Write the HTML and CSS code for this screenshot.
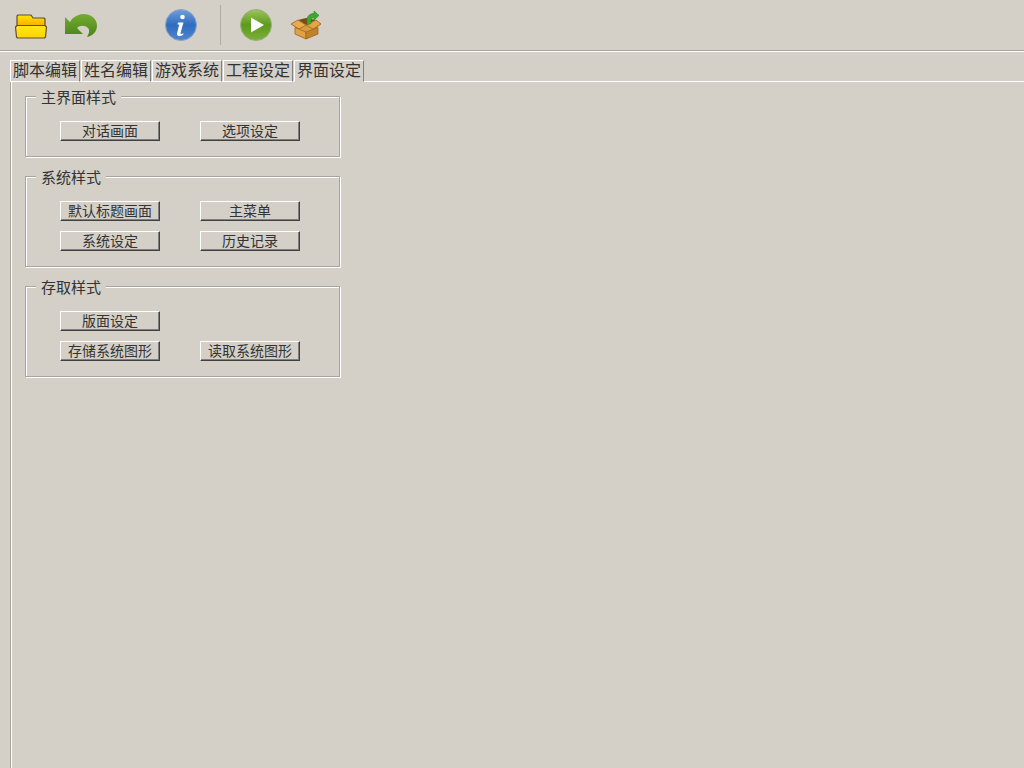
FILE: index.html
```html
<!DOCTYPE html>
<html lang="zh-CN">
<head>
  <meta charset="UTF-8" />
  <title>界面设定</title>
  <link rel="stylesheet" href="styles.css">
</head>
<body>

  <!-- toolbar -->
  <div class="toolbar">
    <button class="tool">
      <svg width="34" height="30" viewBox="0 0 34 30">
        <defs>
          <linearGradient id="folderBack" x1="0" y1="0" x2="0" y2="1">
            <stop offset="0" stop-color="#ffe600"/>
            <stop offset="1" stop-color="#f79a00"/>
          </linearGradient>
          <linearGradient id="folderFront" x1="0" y1="0" x2="0" y2="1">
            <stop offset="0" stop-color="#ffe818"/>
            <stop offset="1" stop-color="#ffd400"/>
          </linearGradient>
        </defs>
        <path d="M3 19V6L4 5H17L19 8H30L31 9V19Z" fill="url(#folderBack)" stroke="#5a5030" stroke-width="1.2" stroke-linejoin="round"/>
        <path d="M3 15.5H31L32.5 17L31.5 27L30.5 28H3.5L2.5 27L1.5 17Z" fill="url(#folderFront)" stroke="#5a5030" stroke-width="1.2" stroke-linejoin="round"/>
      </svg>
    </button>
    <button class="tool">
      <svg width="34" height="30" viewBox="0 0 34 30">
        <defs>
          <linearGradient id="undoFill" x1="0" y1="0" x2="0" y2="1">
            <stop offset="0" stop-color="#74ac32"/>
            <stop offset="1" stop-color="#4a8418"/>
          </linearGradient>
        </defs>
        <path d="M1 7V24H19L13 18C16 15 21 15 24 18C26 20 25 24 23 27C29 26 33 21 33 16C33 8 26 4 20 4C15 4 11 6 8 9L6 12Z" fill="url(#undoFill)"/>
      </svg>
    </button>
    <button class="tool tool-info">
      <svg width="34" height="34" viewBox="0 0 34 34">
        <defs>
          <linearGradient id="infoFill" x1="0" y1="0" x2="0" y2="1">
            <stop offset="0" stop-color="#6f9fdc"/>
            <stop offset="0.5" stop-color="#2f6cc0"/>
            <stop offset="1" stop-color="#4f88d0"/>
          </linearGradient>
        </defs>
        <circle cx="17" cy="17" r="15.5" fill="url(#infoFill)" stroke="#8ca4c4" stroke-width="1"/>
        <circle cx="18.5" cy="9" r="2.3" fill="#fff"/>
        <path d="M14 14.5H19.5L16.5 25C16.3 26 17 26.5 19.5 25L19 27C15.5 29 12.5 28 13 25.5L15.2 16.5H13.5Z" fill="#fff"/>
      </svg>
    </button>
    <div class="tool-sep"></div>
    <button class="tool">
      <svg width="34" height="34" viewBox="0 0 34 34">
        <defs>
          <linearGradient id="playFill" x1="0" y1="0" x2="0" y2="1">
            <stop offset="0" stop-color="#9cc45c"/>
            <stop offset="0.5" stop-color="#5c9a1c"/>
            <stop offset="1" stop-color="#7cb03c"/>
          </linearGradient>
        </defs>
        <circle cx="17" cy="17" r="15.5" fill="url(#playFill)" stroke="#9cb07c" stroke-width="1"/>
        <path d="M12 9.5L25 17L12 24.5Z" fill="#fff"/>
      </svg>
    </button>
    <button class="tool">
      <svg width="34" height="30" viewBox="0 0 34 30">
        <path d="M2 14L9 10H27L32 14L29 17V24L17 29L6 24V17Z" fill="#d89a44"/>
        <path d="M9 10L17 15L27 10L17 8Z" fill="#7c4c18"/>
        <path d="M2 14L9 10L17 15L10 19Z" fill="#e8ac50" stroke="#a0661c" stroke-width="0.8"/>
        <path d="M32 14L27 10L17 15L24 19Z" fill="#e4a448" stroke="#a0661c" stroke-width="0.8"/>
        <path d="M6 17.5L17 22V29L6 24Z" fill="#e0a044" stroke="#a0661c" stroke-width="0.8"/>
        <path d="M29 17.5L17 22V29L29 24Z" fill="#c0822c" stroke="#a0661c" stroke-width="0.8"/>
        <path d="M18 15V10C18 6 21 3.5 25 3.5V1L30 5.5L25 10V7.5C23 7.5 22 9 22 11V13.5Z" fill="#3ca82c" stroke="#2c8420" stroke-width="0.6"/>
      </svg>
    </button>
  </div>

  <!-- tabs -->
  <div class="tabs">
    <div class="tab">脚本编辑</div>
    <div class="tab">姓名编辑</div>
    <div class="tab">游戏系统</div>
    <div class="tab">工程设定</div>
    <div class="tab tab-active">界面设定</div>
  </div>

  <div class="panel">
    <div class="group">
      <div class="group-title"><span>主界面样式</span></div>
      <div class="group-buttons">
        <button class="btn">对话画面</button>
        <button class="btn">选项设定</button>
      </div>
    </div>

    <div class="group">
      <div class="group-title"><span>系统样式</span></div>
      <div class="group-buttons">
        <button class="btn">默认标题画面</button>
        <button class="btn">主菜单</button>
        <button class="btn">系统设定</button>
        <button class="btn">历史记录</button>
      </div>
    </div>

    <div class="group">
      <div class="group-title"><span>存取样式</span></div>
      <div class="group-buttons">
        <button class="btn">版面设定</button>
        <div></div>
        <button class="btn">存储系统图形</button>
        <button class="btn">读取系统图形</button>
      </div>
    </div>
  </div>

</body>
</html>
```

FILE: styles.css
```css
html, body {
  height: 100%;
}
body {
  margin: 0;
  background: #d4d0c8;
  color: #333;
  font-family: "Noto Sans CJK SC", "Liberation Sans", sans-serif;
  overflow: hidden;
  display: flex;
  flex-direction: column;
}

/* toolbar */
.toolbar {
  height: 51px;
  flex-shrink: 0;
  display: flex;
  align-items: center;
  padding-left: 14px;
  box-sizing: border-box;
  border-bottom: 1px solid #a8a498;
  box-shadow: 0 1px 0 #fff;
}
.tool {
  width: 34px;
  height: 34px;
  padding: 0;
  margin-right: 16px;
  border: none;
  background: none;
  display: flex;
  align-items: center;
  justify-content: center;
}
.tool-info {
  margin-left: 50px;
  margin-right: 22px;
}
.tool-sep {
  width: 1px;
  height: 40px;
  background: #b0aca0;
  margin-right: 18px;
}

/* tabs */
.tabs {
  height: 31px;
  margin-left: 10px;
  flex-shrink: 0;
  display: flex;
  align-items: flex-end;
  gap: 1px;
  box-shadow: inset 0 -1px 0 #fff;
}
.tab {
  width: 70px;
  height: 22px;
  box-sizing: border-box;
  border-top: 1px solid #fff;
  border-left: 1px solid #fff;
  border-right: 1px solid #808080;
  border-bottom: 1px solid #fff;
  font-size: 16px;
  line-height: 17px;
  text-align: center;
  white-space: nowrap;
}
.tab-active {
  background: #d4d0c8;
  border-bottom-color: #d4d0c8;
}

/* panel under the tabs */
.panel {
  flex: 1;
  margin-left: 11px;
  border-left: 1px solid #fff;
  box-shadow: -1px 0 0 #a8a498;
  padding: 14px 0 0 13px;
  display: flex;
  flex-direction: column;
  gap: 19px;
}

/* group box, etched */
.group {
  width: 315px;
  box-sizing: border-box;
  border: 1px solid #a8a498;
  box-shadow: inset 1px 1px 0 #fff, 1px 1px 0 #fff;
  padding: 0 0 15px 34px;
}
.group-title {
  height: 32px;
  margin-top: -8px;
  display: flex;
  align-items: flex-start;
}
.group-title span {
  margin-left: -24px;
  padding: 0 5px;
  background: #d4d0c8;
  font-size: 15px;
  line-height: 16px;
}
.group-buttons {
  display: grid;
  grid-template-columns: 100px 100px;
  column-gap: 40px;
  row-gap: 10px;
}

/* raised button */
.btn {
  width: 100px;
  height: 20px;
  padding: 0 0 2px;
  box-sizing: border-box;
  background: #d4d0c8;
  border: 1px solid;
  border-color: #fff #404040 #404040 #fff;
  box-shadow: inset -1px -1px 0 #808080;
  font-family: inherit;
  font-size: 14px;
  line-height: 15px;
  color: #333;
  white-space: nowrap;
}
```
